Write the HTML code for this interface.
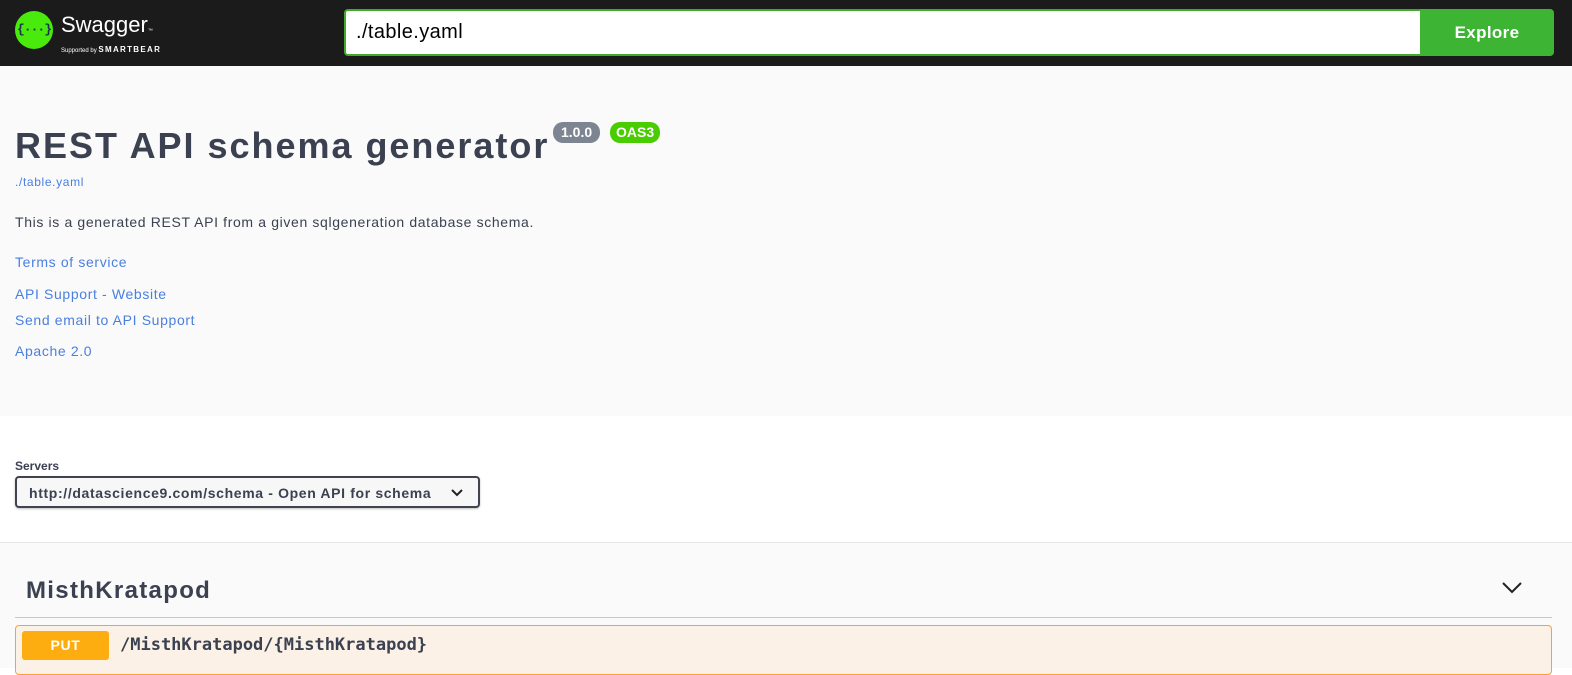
<!DOCTYPE html>
<html><head><style>
*{box-sizing:border-box;margin:0;padding:0}
body{width:1572px;height:668px;overflow:hidden;background:#fff;font-family:"Liberation Sans",sans-serif;color:#3b4151;letter-spacing:.04em}
.top{height:66px;background:#1b1b1b;position:relative}
.logo{position:absolute;left:15px;top:11px;width:38px;height:38px;border-radius:50%;background:#49eb0d;color:#173647;font:bold 13px "Liberation Mono",monospace;text-align:center;line-height:38px;letter-spacing:-1px}
.sw{position:absolute;left:61px;top:12px;color:#fff;font-size:22px;letter-spacing:0}
.sb{position:absolute;left:61px;top:45px;color:#fff;font-size:6px;letter-spacing:0}
.sb b{font-size:8px;letter-spacing:1.3px}
.inp{position:absolute;left:344px;top:9px;width:1076px;height:47px;border:2px solid #41a92c;border-right:none;border-radius:4px 0 0 4px;background:#fff;font-size:20px;padding:10px 10px;color:#000;letter-spacing:.02em}
.btn{position:absolute;left:1420px;top:9px;width:134px;height:47px;background:#3db433;border-radius:0 4px 4px 0;color:#fff;font-weight:bold;font-size:17px;text-align:center;line-height:47px;letter-spacing:.02em}
.info{position:absolute;top:66px;left:0;width:1572px;height:350px;background:#fafafa}
h1{position:absolute;left:15px;top:125px;font-size:36px;font-weight:bold;color:#3b4151;letter-spacing:.055em}
.v{position:absolute;left:553px;top:122px;background:#7d8492;color:#fff;font-size:14px;font-weight:bold;padding:2px 8px;border-radius:10px;height:21px;letter-spacing:0}
.o{position:absolute;left:610px;top:122px;background:#49cc00;color:#fff;font-size:14px;font-weight:bold;padding:2px 6px;border-radius:10px;height:21px;letter-spacing:0}
a{color:#4a7fe0;text-decoration:none;position:absolute;left:15px;font-size:14px}
p.d{position:absolute;left:15px;top:214px;font-size:14px}
.srv{position:absolute;left:15px;top:459px;font-size:12px;font-weight:bold;letter-spacing:0}
.sel{position:absolute;left:15px;top:476px;width:465px;height:32px;border:2px solid #41444e;border-radius:4px;background:#f7f7f7;box-shadow:0 1px 2px rgba(0,0,0,.25);font-size:14px;font-weight:bold;padding:7px 12px}
.sec{position:absolute;top:542px;left:0;width:1572px;height:126px;background:#fafafa;border-top:1px solid #e8e8e8}
.tag{position:absolute;left:26px;top:577px;font-size:24px;font-weight:bold;letter-spacing:.055em}
.line{position:absolute;left:15px;top:617px;width:1537px;height:1px;background:#c8c8cc}
.op{position:absolute;left:15px;top:625px;width:1537px;height:50px;border:1px solid #fca130;border-radius:4px;background:#fbf1e6}
.put{position:absolute;left:22px;top:631px;width:87px;height:29px;background:#fdad10;border-radius:3px;color:#fff;font-weight:bold;font-size:14px;text-align:center;line-height:29px}
.path{position:absolute;left:120px;top:635px;font:bold 17px "DejaVu Sans Mono",monospace;color:#3b4151;letter-spacing:0}
</style></head><body>
<div class="top"><div class="logo">{···}</div><div class="sw">Swagger<span style="font-size:5px">™</span></div><div class="sb">Supported by <b>SMARTBEAR</b></div>
<div class="inp">./table.yaml</div><div class="btn">Explore</div></div>
<div class="info"></div>
<h1>REST API schema generator</h1><span class="v">1.0.0</span><span class="o">OAS3</span>
<a style="top:175px;font-size:12px">./table.yaml</a>
<p class="d">This is a generated REST API from a given sqlgeneration database schema.</p>
<a style="top:254px">Terms of service</a>
<a style="top:286px">API Support - Website</a>
<a style="top:312px">Send email to API Support</a>
<a style="top:343px">Apache 2.0</a>
<div class="srv">Servers</div>
<div class="sel">http://datascience9.com/schema - Open API for schema<svg style="position:absolute;left:434px;top:11px" width="12" height="8" viewBox="0 0 12 8"><path d="M1 1l5 5 5-5" stroke="#222" stroke-width="2" fill="none"/></svg></div>
<div class="sec"></div>
<div class="tag">MisthKratapod</div>
<svg style="position:absolute;left:1502px;top:582px" width="20" height="12" viewBox="0 0 20 12"><path d="M1 1l9 9 9-9" stroke="#222" stroke-width="2" fill="none"/></svg>
<div class="line"></div>
<div class="op"></div><div class="put">PUT</div><div class="path">/MisthKratapod/{MisthKratapod}</div>
</body></html>
